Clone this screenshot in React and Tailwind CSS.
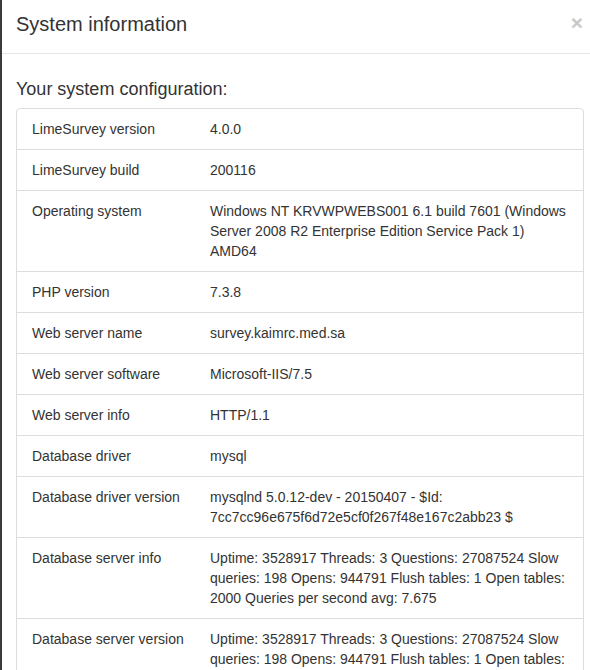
import React from "react";

const rows = [
  ["LimeSurvey version", "4.0.0"],
  ["LimeSurvey build", "200116"],
  [
    "Operating system",
    "Windows NT KRVWPWEBS001 6.1 build 7601 (Windows Server 2008 R2 Enterprise Edition Service Pack 1) AMD64",
  ],
  ["PHP version", "7.3.8"],
  ["Web server name", "survey.kaimrc.med.sa"],
  ["Web server software", "Microsoft-IIS/7.5"],
  ["Web server info", "HTTP/1.1"],
  ["Database driver", "mysql"],
  [
    "Database driver version",
    "mysqlnd 5.0.12-dev - 20150407 - $Id: 7cc7cc96e675f6d72e5cf0f267f48e167c2abb23 $",
  ],
  [
    "Database server info",
    "Uptime: 3528917 Threads: 3 Questions: 27087524 Slow queries: 198 Opens: 944791 Flush tables: 1 Open tables: 2000 Queries per second avg: 7.675",
  ],
  [
    "Database server version",
    "Uptime: 3528917 Threads: 3 Questions: 27087524 Slow queries: 198 Opens: 944791 Flush tables: 1 Open tables: 2000 Queries per second avg: 7.675",
  ],
];

const App = () => {
  return (
    <div
      className="w-[590px] h-[670px] overflow-hidden flex bg-[#3a3a3a] text-[#333]"
      style={{ fontFamily: '"Liberation Sans", Arial, sans-serif' }}
    >
      {/* modal dialog, wider than the window so its right edge is cut off */}
      <div className="ml-[2px] w-[596px] shrink-0 bg-white">
        {/* header */}
        <div className="h-[54px] border-b border-[#e5e5e5] px-[14px] pt-[10px] flex justify-between">
          <h4 className="text-[20px] leading-[28px]">System information</h4>
          <button className="mr-[1px] mt-[-1px] h-[26px] text-[21px] font-bold leading-none text-[#c8c8c8]">
            ×
          </button>
        </div>

        {/* body */}
        <div className="px-[14px] pt-[25px]">
          <h4 className="text-[18px] leading-[20px] mb-[9px]">Your system configuration:</h4>
          <div className="border border-[#ddd] rounded-[4px] overflow-hidden">
            <table className="w-full table-fixed border-collapse text-[14px] leading-[20px]">
              <colgroup>
                <col className="w-[193px]" />
                <col />
              </colgroup>
              <tbody>
                {rows.map(([label, value], i) => (
                  <tr key={label} className={i > 0 ? "border-t border-[#ddd]" : ""}>
                    <td className="pl-[15px] py-[10px] align-top whitespace-nowrap">{label}</td>
                    <td className="pr-[15px] py-[10px] align-top">{value}</td>
                  </tr>
                ))}
              </tbody>
            </table>
          </div>
        </div>
      </div>
    </div>
  );
};

export default App;
